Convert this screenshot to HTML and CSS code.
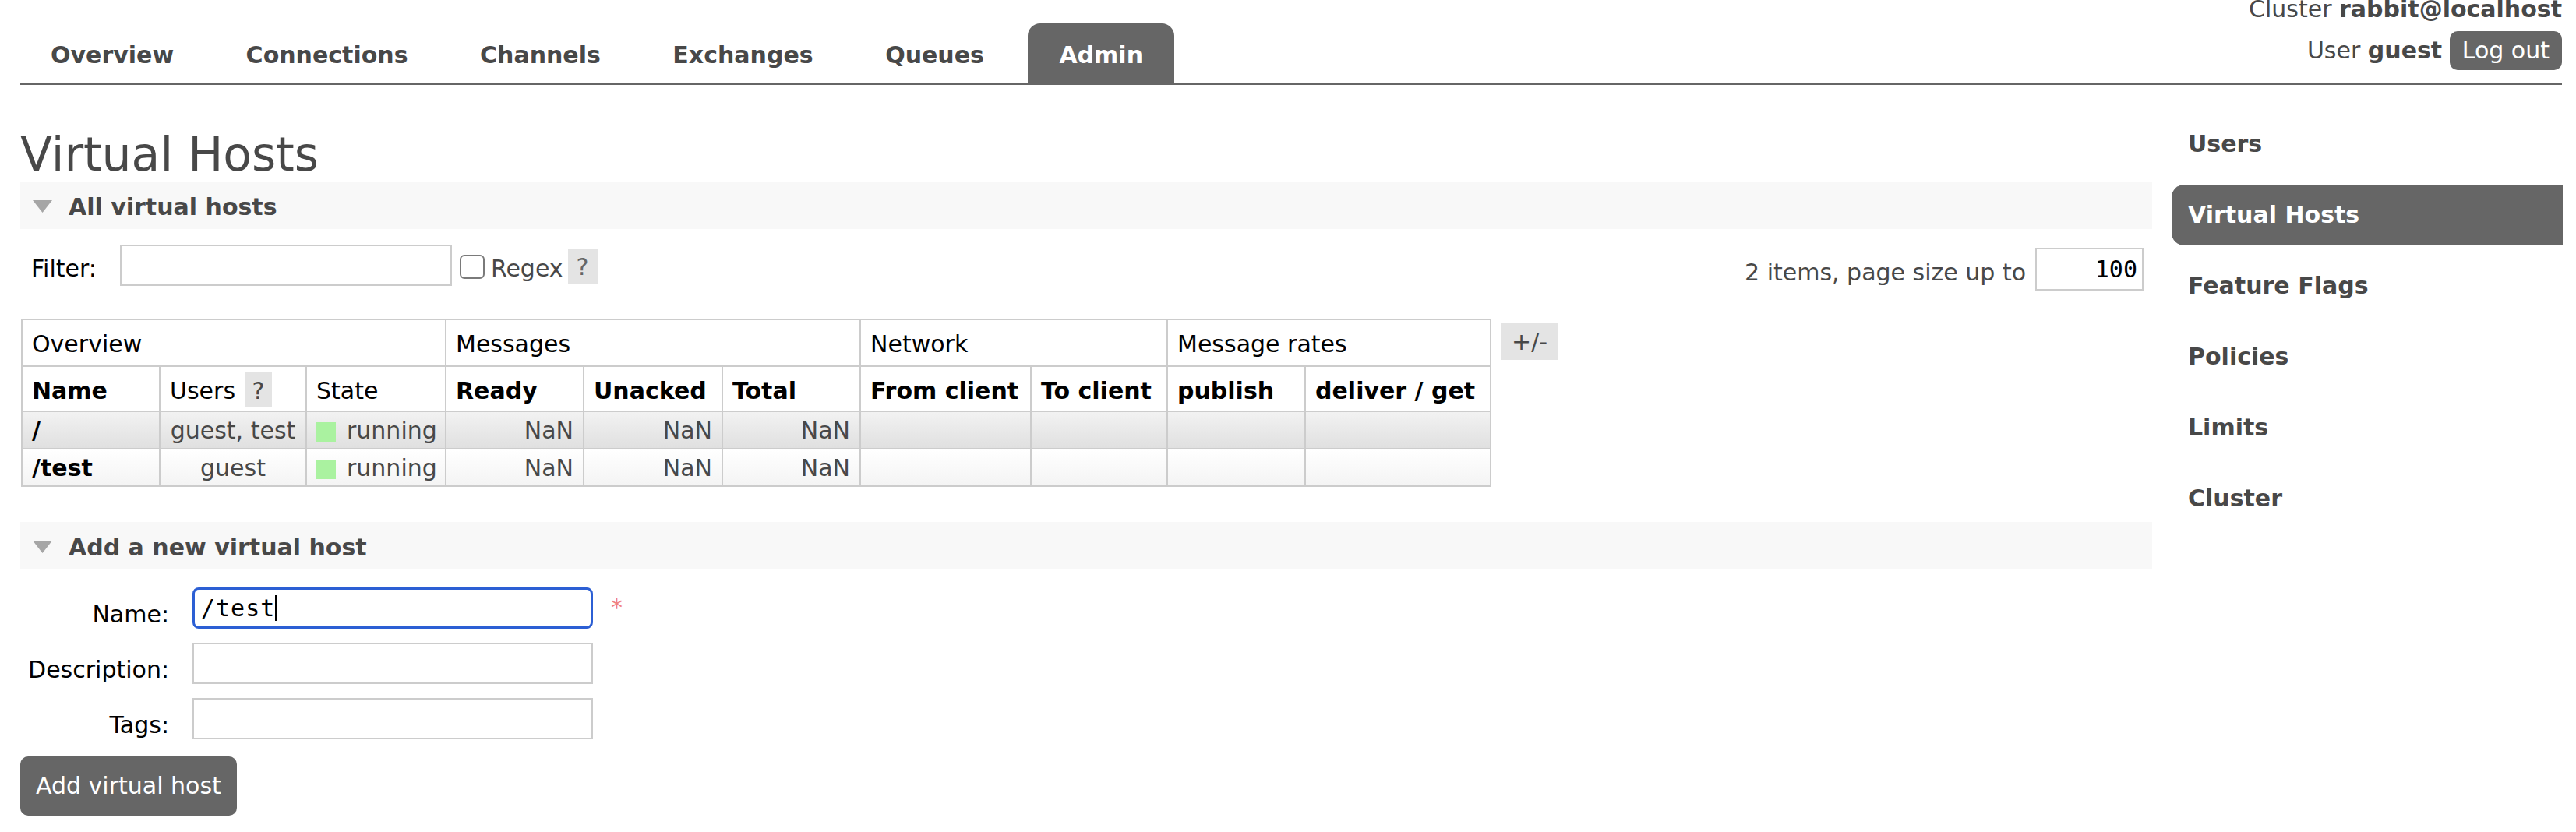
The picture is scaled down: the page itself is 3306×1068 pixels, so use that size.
FILE: index.html
```html
<!DOCTYPE html>
<html lang="en">
<head>
<meta charset="utf-8">
<title>RabbitMQ Management: Virtual Hosts</title>
<link rel="stylesheet" href="styles.css">
</head>
<body>
<div class="header">
  <ul class="tabs">
    <li><a>Overview</a></li>
    <li><a>Connections</a></li>
    <li><a>Channels</a></li>
    <li><a>Exchanges</a></li>
    <li><a>Queues</a></li>
    <li class="active"><a>Admin</a></li>
  </ul>
  <div class="login">
    <div class="login-row">Cluster <b>rabbit@localhost</b></div>
    <div class="login-row second">User <b>guest</b> <span class="btn logout">Log out</span></div>
  </div>
</div>

<div class="page">
  <div class="main">
    <h1>Virtual Hosts</h1>

    <div class="section">
      <h2 class="section-title"><svg class="tri" viewBox="0 0 25 16"><polygon points="0,0 25,0 12.5,16"/></svg>All virtual hosts</h2>
      <div class="filter-row">
        <div class="filter-left">
          <span class="filter-label">Filter:</span>
          <input class="text filter-input" type="text" value="">
          <span class="checkbox"></span>
          <span class="regex">Regex</span>
          <span class="help">?</span>
        </div>
        <div class="filter-right">
          <span class="count">2 items, page size up to</span>
          <input class="text page-size" type="text" value="100">
        </div>
      </div>

      <div class="table-wrap">
        <table class="list">
          <colgroup>
            <col class="w-name"><col class="w-users"><col class="w-state">
            <col class="w-ready"><col class="w-unacked"><col class="w-total">
            <col class="w-from"><col class="w-to"><col class="w-pub"><col class="w-deliver">
          </colgroup>
          <thead>
            <tr class="group">
              <th colspan="3">Overview</th>
              <th colspan="3">Messages</th>
              <th colspan="2">Network</th>
              <th colspan="2">Message rates</th>
            </tr>
            <tr class="cols">
              <th class="b">Name</th>
              <th>Users <span class="help in-th">?</span></th>
              <th>State</th>
              <th class="b">Ready</th>
              <th class="b">Unacked</th>
              <th class="b">Total</th>
              <th class="b">From client</th>
              <th class="b">To client</th>
              <th class="b">publish</th>
              <th class="b">deliver / get</th>
            </tr>
          </thead>
          <tbody>
            <tr class="alt1">
              <td class="name">/</td>
              <td class="c">guest, test</td>
              <td><span class="state-green"></span>running</td>
              <td class="r">NaN</td>
              <td class="r">NaN</td>
              <td class="r">NaN</td>
              <td></td><td></td><td></td><td></td>
            </tr>
            <tr class="alt2">
              <td class="name">/test</td>
              <td class="c">guest</td>
              <td><span class="state-green"></span>running</td>
              <td class="r">NaN</td>
              <td class="r">NaN</td>
              <td class="r">NaN</td>
              <td></td><td></td><td></td><td></td>
            </tr>
          </tbody>
        </table>
        <span class="help plusminus">+/-</span>
      </div>
    </div>

    <div class="section second-section">
      <h2 class="section-title"><svg class="tri" viewBox="0 0 25 16"><polygon points="0,0 25,0 12.5,16"/></svg>Add a new virtual host</h2>
      <div class="form">
        <label class="form-label">Name:</label>
        <div class="text focused">/test<span class="caret"></span></div>
        <span class="mand">*</span>

        <label class="form-label">Description:</label>
        <input class="text" type="text" value="">
        <span></span>

        <label class="form-label">Tags:</label>
        <input class="text" type="text" value="">
        <span></span>
      </div>
      <span class="btn add-btn">Add virtual host</span>
    </div>
  </div>

  <ul class="sidebar">
    <li><a>Users</a></li>
    <li class="active"><a>Virtual Hosts</a></li>
    <li><a>Feature Flags</a></li>
    <li><a>Policies</a></li>
    <li><a>Limits</a></li>
    <li><a>Cluster</a></li>
  </ul>
</div>
</body>
</html>
```

FILE: styles.css
```css
* { box-sizing: border-box; }

html, body {
  margin: 0;
  padding: 0;
  background: #fff;
}

body {
  font-family: "DejaVu Sans", Verdana, sans-serif;
  font-size: 30px;
  line-height: 36px;
  color: #484848;
  overflow: hidden;
}

/* ---------- header ---------- */
.header {
  display: flex;
  justify-content: space-between;
  align-items: flex-end;
  height: 109px;
  margin: 0 18px 0 26px;
  border-bottom: 2px solid #666;
}

.tabs {
  display: flex;
  gap: 12.5px;
  list-style: none;
  margin: 0 0 0 -1px;
  padding: 0;
}

.tabs a {
  display: block;
  padding: 23px 40px 18px;
  font-weight: bold;
  color: #484848;
  border-radius: 16px 16px 0 0;
}

.tabs .active {
  margin-left: 4px;
}

.tabs .active a {
  background: #666;
  color: #fff;
}

.login {
  align-self: flex-start;
  margin-top: -6px;
  text-align: right;
  white-space: nowrap;
}

.login-row.second {
  margin-top: 10px;
}

.btn {
  display: inline-block;
  background: #666;
  color: #fff;
  border-radius: 10px;
}

.logout {
  padding: 7px 16px;
}

/* ---------- page ---------- */
.page {
  display: flex;
  align-items: flex-start;
  margin: 0 17px 0 26px;
}

.main {
  width: 2736px;
  flex: none;
}

h1 {
  margin: 55px 0 0;
  font-size: 60px;
  line-height: 69px;
  font-weight: normal;
  color: #484848;
}

.section-title {
  margin: 0;
  padding: 15px 0 10px 16px;
  background: #f8f8f8;
  font-size: 30px;
  line-height: 36px;
  font-weight: bold;
  color: #484848;
}

.tri {
  display: inline-block;
  width: 25px;
  height: 16px;
  margin-right: 21px;
  vertical-align: 3px;
  fill: #a6a6a6;
}

/* ---------- filter ---------- */
.filter-row {
  display: flex;
  justify-content: space-between;
  align-items: flex-start;
  margin-top: 20px;
}

.filter-left {
  display: flex;
  align-items: flex-start;
  padding-left: 14px;
}

.filter-label {
  color: #000;
  margin-top: 13px;
}

input.text, div.text {
  display: block;
  height: 53px;
  border: 2px solid #ccc;
  background: #fff;
  font-family: "DejaVu Sans Mono", monospace;
  font-size: 30px;
  color: #000;
  padding: 0 6px;
  margin: 0;
  outline: none;
}

.filter-input {
  width: 426px;
  margin-left: 30px !important;
}

.checkbox {
  width: 32px;
  height: 31px;
  margin: 13px 0 0 10px;
  border: 2px solid #7a7a7a;
  border-radius: 6px;
  background: #fff;
}

.regex {
  margin: 13px 0 0 8px;
}

.help {
  display: inline-block;
  background: #e4e4e4;
  color: #666;
  padding: 5px 11px 4px;
}

.filter-left .help {
  margin: 6px 0 0 6px;
}

.filter-right {
  display: flex;
  align-items: flex-start;
  margin-top: 4px;
  margin-right: 11px;
}

.count {
  margin-top: 14px;
  margin-right: 12px;
}

.page-size {
  width: 139px;
  height: 55px !important;
  text-align: right;
}

/* ---------- table ---------- */
.table-wrap {
  display: flex;
  align-items: flex-start;
  gap: 13px;
  margin-top: 36px;
  padding-left: 1px;
}

table.list {
  border-collapse: collapse;
  table-layout: fixed;
  width: 1885px;
  flex: none;
}

.w-name { width: 177px; }
.w-users { width: 188px; }
.w-state { width: 179px; }
.w-ready { width: 177px; }
.w-unacked { width: 178px; }
.w-total { width: 177px; }
.w-from { width: 219px; }
.w-to { width: 175px; }
.w-pub { width: 177px; }
.w-deliver { width: 238px; }

table.list th,
table.list td {
  border: 2px solid #ccc;
  padding: 6px 12px 4px;
  text-align: left;
  white-space: nowrap;
}

table.list th {
  color: #000;
  font-weight: normal;
  background: #fff;
}

table.list tr.group th {
  padding-top: 13px;
  padding-bottom: 9px;
}

table.list tr.cols th {
  padding-top: 13px;
  padding-bottom: 7px;
}

table.list th.b {
  font-weight: bold;
}

.help.in-th {
  margin: -7px 0 -2px 2px;
  padding: 7px 10px 2px;
  color: #484848;
}

table.list tr.alt1 td {
  background: linear-gradient(#f2f2f2, #e0e0e0);
}

table.list tr.alt2 td {
  background: linear-gradient(#ffffff, #f4f4f4);
}

td.name {
  font-weight: bold;
  color: #000;
}

td.c { text-align: center !important; }
td.r { text-align: right !important; }

.state-green {
  display: inline-block;
  width: 25px;
  height: 25px;
  background: #aaf2a0;
  margin-right: 14px;
  vertical-align: -4px;
}

.plusminus {
  margin-top: 6px;
  padding: 6px 13px 5px;
  color: #484848;
}

/* ---------- add form ---------- */
.second-section {
  margin-top: 45px;
}

.form {
  display: grid;
  grid-template-columns: 191px 514px auto;
  column-gap: 30px;
  row-gap: 18px;
  margin-top: 23px;
}

.form-label {
  text-align: right;
  color: #000;
  padding-top: 17px;
}

div.text.focused {
  border: 3px solid #2c5fd4;
  border-radius: 8px;
  line-height: 47px;
  padding: 0 8px;
  letter-spacing: 1px;
}

.caret {
  display: inline-block;
  width: 2px;
  height: 33px;
  background: #000;
  vertical-align: -6px;
}

.mand {
  color: #f08080;
  padding-top: 8px;
  margin-left: -7px;
}

.add-btn {
  margin-top: 22px;
  padding: 20px 20px;
}

/* ---------- sidebar ---------- */
.sidebar {
  flex: 1;
  display: flex;
  flex-direction: column;
  gap: 13px;
  list-style: none;
  margin: 37px 0 0 25px;
  padding: 0;
}

.sidebar a {
  display: block;
  padding: 21px;
  font-weight: bold;
  color: #484848;
  border-radius: 16px 0 0 16px;
}

.sidebar .active a {
  background: #666;
  color: #fff;
}
```
